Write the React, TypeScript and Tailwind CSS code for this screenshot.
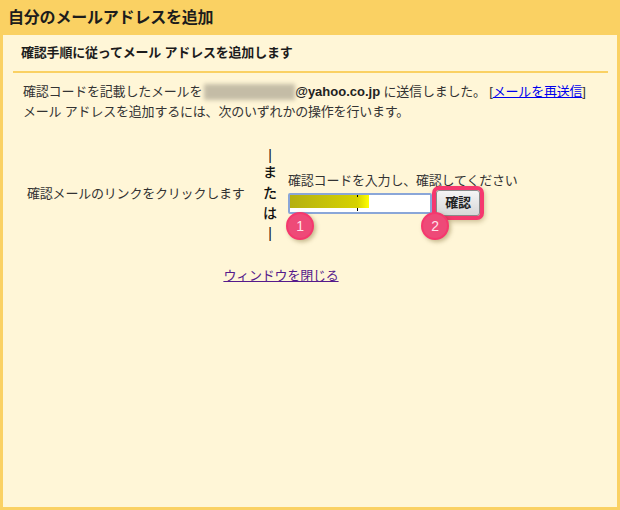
import React from "react";

const font = "font-['Liberation_Sans','Noto_Sans_CJK_JP',sans-serif]";

// Numbered marker that sits over the form
const Marker = ({ n, className }: { n: number; className: string }) => (
  <div
    className={`absolute w-[28px] h-[28px] rounded-full bg-[#ee4a78] border-2 border-[#f5386e] text-[#ffe4ec] text-[14px] flex items-center justify-center shadow-[2px_2px_4px_rgba(90,70,0,0.35)] ${className}`}
  >
    {n}
  </div>
);

const App: React.FC = () => {
  return (
    <div className={`w-[620px] h-[510px] flex flex-col bg-[#fad163] text-[#222] tracking-[-0.2px] ${font}`}>
      {/* Title */}
      <div className="h-[35px] shrink-0 pl-[8px] flex items-center text-[16px] font-bold text-[#1c1c1c]">
        自分のメールアドレスを追加
      </div>

      {/* Panel */}
      <div className="flex-1 mx-[3px] mb-[3px] bg-[#fff6d7] flex flex-col">
        <div className="h-[38px] ml-[10px] mr-[9px] pl-[8px] pt-[8px] border-b-2 border-[#fad163] text-[13px] leading-[19px] font-bold text-[#1c1c1c]">
          確認手順に従ってメール アドレスを追加します
        </div>

        <div className="pl-[20px] pt-[9px] text-[13px] leading-[20px] text-[#333]">
          <div className="flex items-center whitespace-pre">
            <span>確認コードを記載したメールを</span>
            <span className="w-[91px] h-[16px] ml-[2px] bg-[#c4bca6] blur-[2px]"></span>
            <span className="font-bold text-[#222] tracking-normal">@yahoo.co.jp</span>
            <span> に送信しました。 [</span>
            <a className="text-[#0000ee] underline">メールを再送信</a>
            <span>]</span>
          </div>
          <div>メール アドレスを追加するには、次のいずれかの操作を行います。</div>
        </div>

        {/* Options */}
        <div className="relative flex mt-[23px] h-[100px] text-[13px] text-[#333]">
          <div className="w-[260px] pl-[24px] pt-[39px] leading-[20px]">確認メールのリンクをクリックします</div>

          <div className="w-[14px] flex flex-col items-center font-medium text-[14px] leading-[20px] text-[#111]">
            <span className="h-[17px]">|</span>
            <span>ま</span>
            <span className="mt-[1px]">た</span>
            <span>は</span>
            <span>|</span>
          </div>

          <div className="ml-[11px] pt-[27px]">
            <div className="leading-[18px]">確認コードを入力し、確認してください</div>
            <div className="flex items-center">
              <div className="relative w-[144px] h-[21px] bg-white border-2 border-[#8aa6d8] rounded-[2px]">
                <div className="w-[79px] h-[13px] bg-gradient-to-r from-[#b5b010] via-[#d6d200] via-85% to-[#ffff00]"></div>
                <div className="absolute left-[67px] top-0 w-px h-[2px] bg-black"></div>
                <div className="absolute left-[67px] top-[13px] w-px h-[3px] bg-black"></div>
              </div>
              <div className="ml-[4px] w-[44px] h-[26px] bg-gradient-to-b from-[#f5f5f5] to-[#d8d8d8] border border-[#8a8a8a] rounded-[3px] outline-[4px] outline-[#f5386e] outline-offset-0 shadow-[1px_2px_5px_4px_rgba(90,70,0,0.3)] flex items-center justify-center font-bold text-[13px] text-[#222]">
                確認
              </div>
            </div>
          </div>

          <Marker n={1} className="left-[283px] top-[67px]" />
          <Marker n={2} className="left-[418px] top-[67px]" />
        </div>

        <div className="mt-[21px] text-center pr-[58px] text-[13px] leading-[20px]">
          <a className="text-[#551a8b] underline">ウィンドウを閉じる</a>
        </div>
      </div>
    </div>
  );
};

export default App;
